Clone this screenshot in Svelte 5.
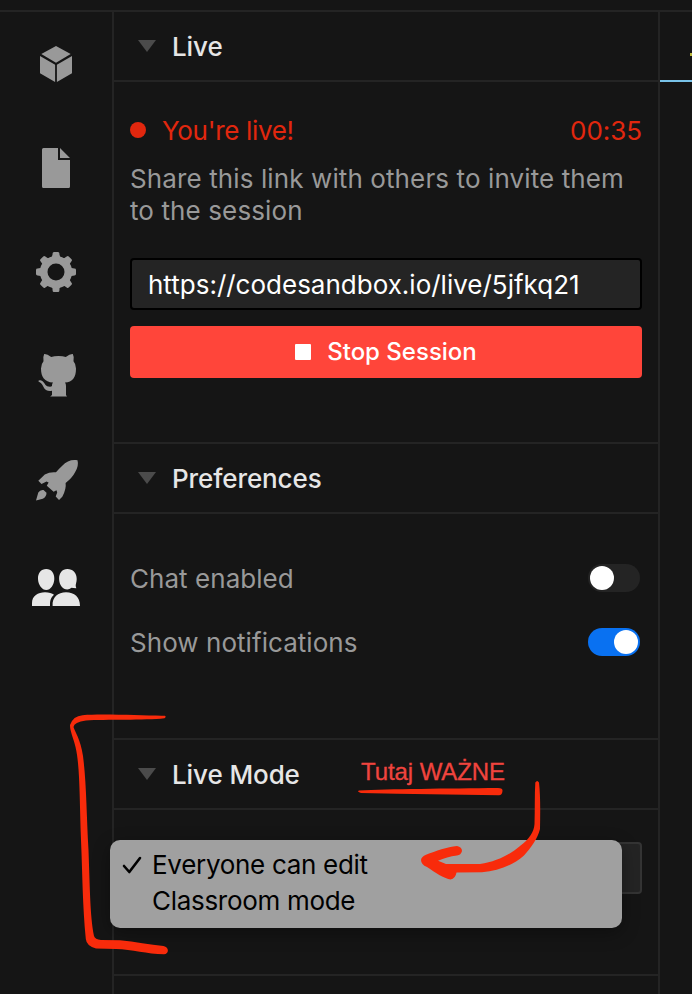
<script>
  let url = $state('https://codesandbox.io/live/5jfkq21');
  const preferences = [
    { label: 'Chat enabled', on: false },
    { label: 'Show notifications', on: true }
  ];
  const teeth = [0, 45, 90, 135, 180, 225, 270, 315];
</script>

{#snippet heading(title)}
  <header class="heading">
    <svg class="caret" width="18" height="12" viewBox="0 0 18 12"><path d="M0 0H18L9 12Z" /></svg>
    <h2>{title}</h2>
  </header>
{/snippet}

<div class="screen">
  <div class="topbar"></div>
  <div class="workspace">
    <nav class="rail">
      <div class="slot">
        <svg viewBox="32 40 48 48"><path d="M56 46L70.7 54L56 62.8L41.3 54ZM40 56L55.1 64.8V82L40 73.2ZM72 56L56.9 64.8V82L72 73.2Z" /></svg>
      </div>
      <div class="slot">
        <svg viewBox="32 144 48 48"><path d="M43.5 148H58V160H70V186.500Q70 188 68.500 188H43.500Q42 188 42 186.500V149.500Q42 148 43.500 148ZM60 148L70 158H60Z" /></svg>
      </div>
      <div class="slot">
        <svg viewBox="32 248 48 48">
          <circle cx="56" cy="272" r="12.300" fill="none" stroke="#999" stroke-width="7.600" />
          {#each teeth as angle}
            <path transform="rotate({angle} 56 272)" d="M50.500 258.500Q52.500 257 52.600 253.500Q52.600 252 54 252H58Q59.400 252 59.400 253.500Q59.500 257 61.500 258.500Z" />
          {/each}
        </svg>
      </div>
      <div class="slot">
        <svg viewBox="32 352 48 48"><path d="M44.200 354Q47 353.700 51.200 357Q54 356 58.500 356T65.800 357Q70 353.700 72.800 354Q74.300 356.500 73.500 361.200Q76 364 76 368.500C76 377.500 72.500 382 65 382.600Q66 384 66 386V395L67 396.500H50.200L52 395V390.700C44.500 391.800 44 387.500 42.500 385C41.500 383 39.500 382.300 38.300 381.200Q38.500 380 40.500 380.300C44.500 381 44.700 386.500 48.500 386.500Q51 387 52 386Q51.800 383.800 53 382.600C44.500 382 41 377 41 368.500Q41 364 43.500 361.200Q42.700 357 44.200 354Z" /></svg>
      </div>
      <div class="slot">
        <svg viewBox="32 456 48 48"><path d="M77.500 460.200C71.500 459.300 66.800 460.800 62 466Q58.500 469.200 56 472.300Q50 471.600 44.800 474.500L38.300 480.800L41.500 484L46.500 481.500L48.600 482.500L46.800 485.800L53.600 491.700L56.500 490.200L57.200 492.500L55.700 496.500L59 500L62.300 496.700Q66.500 489 65.600 483Q72.500 477.500 75.200 472Q79 465.500 77.500 460.200ZM36 500.500L38.300 492.500Q40 489.500 43.500 490L46.500 492.800Q46.500 497 42.800 498.800Z" /></svg>
      </div>
      <div class="slot active">
        <svg viewBox="32 564 48 48"><path d="M46.300 569C51.300 569 54.500 573 54.300 579C54.100 585 50.600 590 46.300 590S38.200 585 38 579C37.800 573 41 569 46.300 569ZM67.300 569C73 569 76.800 573 76.700 579C76.700 582 75.500 584.500 75.700 586L76.300 588.200Q73 588 71.500 587.800Q69.500 589.500 67.300 589.500C62.700 589.500 59.300 585 59.100 579C59 573 62.300 569 67.300 569ZM32 606V603C32 596 38 592.300 45 592.300Q51 592.300 54 594.800C50.300 598 50 601 50 606ZM52.600 606C52 597 58 592.300 66 592.300C74.500 592.300 80 597 80 606Z" /></svg>
      </div>
    </nav>

    <main class="panel">
      <section>
        {@render heading('Live')}
        <div class="body live">
          <div class="status">
            <span class="dot"></span>
            <span class="message">You're live!</span>
            <span class="timer">00:35</span>
          </div>
          <p>Share this link with others to invite them<br />to the session</p>
          <input bind:value={url} aria-label="Live session link" />
          <button class="stop"><span class="square"></span>Stop Session</button>
        </div>
      </section>

      <section>
        {@render heading('Preferences')}
        <div class="body preferences">
          {#each preferences as item}
            <div class="preference">
              <span>{item.label}</span>
              <span class="toggle" class:on={item.on}><i></i></span>
            </div>
          {/each}
        </div>
      </section>

      <section>
        {@render heading('Live Mode')}
        <div class="body mode">
          <div class="select"></div>
          <div class="menu">
            <div class="option">
              <svg width="20" height="20" viewBox="0 0 20 20"><path d="M2 11L7.300 17L18 3" /></svg>
              <span>Everyone can edit</span>
            </div>
            <div class="option second"><span>Classroom mode</span></div>
          </div>
        </div>
      </section>
    </main>

    <aside class="editor">
      <div class="tab"><span></span></div>
    </aside>
  </div>

  <div class="note">Tutaj WAŻNE</div>
  <svg class="ink" width="692" height="994" viewBox="0 0 692 994">
    <path d="M165 715.700Q166.500 717 164.500 718.200C145 720.500 105 719 86 720.500Q74 722 73.500 727C75 732 80.500 739 83 756C86.500 783 86.500 815 88.500 850C90 890 90 915 94 936Q95 939.500 101 940L120 940.300C135 941.500 150 945 163.500 946C169.500 947 169 954 164 954.300C147 954 132 949.500 116 949L96 948.500Q86.500 946 85.800 939C82.500 905 82.500 875 81 840C79.500 800 80 765 75.500 747C73.500 738 69.800 731 70 725Q73 716 82.500 715.200C105 713.500 146 716 165 715.700Z" />
    <path d="M359 790.500C388 789 448 788.500 498 788Q503 788 502.500 791Q502 795.300 499 795.300L397 793.800L361 793Q356.500 791.700 359 790.500Z" />
    <path d="M535.300 782.500Q537.200 779.500 539 782.500C540.500 795 540.300 812 540 829C537.500 839 531 847.500 524 855.500C511 866.500 498 870.800 482 872.300L456.500 872.500Q455.500 878.500 450.500 879.500C445 879 435 872.500 427 867Q421 864.500 421 860Q421.500 856.500 426 854.800C436 851 447 847 457 846Q462 847 462 851Q461 855 457 855.500C450 856.300 444 858.500 438 860.800L446 864L480 864C497 861.500 510 854.500 520 846C529 839.500 534 832 534.500 824C535 810 534.500 795 535.300 782.500Z" />
  </svg>
</div>

<style>
  :global(body) { margin: 0; background: #151515; }
  .screen { position: relative; width: 692px; height: 994px; overflow: hidden; display: flex; flex-direction: column; background: #151515; color: #999; font-family: Inter, sans-serif; font-size: 26px; line-height: 32px; }
  .topbar { flex: 0 0 10px; border-bottom: 2px solid #242424; }
  .workspace { flex: 1; display: flex; min-height: 0; }
  .rail { width: 112px; border-right: 2px solid #242424; }
  .slot { height: 104px; display: flex; align-items: center; justify-content: center; }
  .slot svg { width: 48px; height: 48px; fill: #999; }
  .active { height: 112px; }
  .active svg { fill: #e6e6e6; }
  .panel { width: 544px; border-right: 2px solid #242424; }
  section { border-bottom: 2px solid #242424; }
  .heading { box-sizing: border-box; height: 70px; display: flex; align-items: center; padding: 2px 0 0 24px; gap: 16px; border-bottom: 2px solid #242424; }
  .caret { fill: #4b4b4b; margin-bottom: 2px; }
  h2 { margin: 0; color: #e6e6e6; font-size: 26px; line-height: 32px; font-weight: 500; letter-spacing: -0.1px; }
  .body { box-sizing: border-box; padding: 0 16px; }
  .live { height: 360px; padding-top: 33px; }
  .status { display: flex; align-items: center; color: #e1270e; height: 32px; letter-spacing: -0.32px; }
  .dot { width: 16px; height: 16px; border-radius: 50%; margin: 0 16px 2px 0; background: #e1270e; }
  .timer { margin-left: auto; letter-spacing: -0.05px; }
  p { margin: 16px 0 31px; white-space: nowrap; letter-spacing: 0.11px; }
  input { display: block; box-sizing: border-box; width: 512px; height: 52px; padding: 0 16px; border: 2px solid #000; border-radius: 4px; background: #242424; color: #fff; font: inherit; letter-spacing: 0; }
  .stop { width: 512px; height: 52px; margin-top: 16px; border: 0; border-radius: 4px; background: #ff453a; color: #fff; font: 500 24px/32px Inter, sans-serif; display: flex; align-items: center; justify-content: center; gap: 16px; padding: 0; }
  .square { width: 16px; height: 16px; background: #fff; border-radius: 1px; }
  .preferences { height: 224px; padding-top: 49px; }
  .preference { height: 32px; margin-bottom: 32px; display: flex; align-items: center; justify-content: space-between; letter-spacing: 0.05px; }
  .toggle { width: 52px; height: 28px; border-radius: 14px; background: #242424; margin: 0 2px 2px 0; display: flex; align-items: center; }
  .toggle i { width: 24px; height: 24px; margin-left: 2px; border-radius: 50%; background: #fff; }
  .toggle.on { background: #0971f1; justify-content: flex-end; }
  .toggle.on i { margin-right: 2px; }
  .mode { height: 164px; padding-top: 32px; position: relative; }
  .select { box-sizing: border-box; width: 512px; height: 52px; border: 2px solid #343434; border-radius: 4px; background: #242424; }
  .menu { position: absolute; left: -4px; top: 30px; box-sizing: border-box; width: 512px; height: 88px; padding-top: 7px; border-radius: 10px; background: #a0a0a0; color: #000; box-shadow: 0 5px 18px #0005; }
  .option { height: 36px; display: flex; align-items: center; gap: 10px; padding-left: 12px; letter-spacing: -0.3px; }
  .option svg { fill: none; stroke: #000; stroke-width: 2.600; stroke-linecap: round; stroke-linejoin: round; }
  .second { padding-left: 42px; }
  .editor { width: 32px; }
  .tab { height: 68px; border-bottom: 2px solid #78c2e8; display: flex; justify-content: flex-end; }
  .tab span { width: 2px; height: 3px; margin-top: 41px; background: #b9b63b; }
  .note { position: absolute; left: 361px; top: 758px; color: #f0443e; font: 24px/28px "Liberation Sans", sans-serif; letter-spacing: -0.08px; white-space: nowrap; -webkit-text-stroke: 0.3px #f0443e; }
  .ink { position: absolute; left: 0; top: 0; fill: #f82b0b; pointer-events: none; }
</style>
